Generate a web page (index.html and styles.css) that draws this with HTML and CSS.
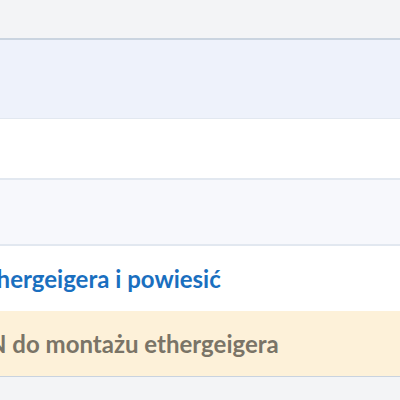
FILE: index.html
```html
<!DOCTYPE html>
<html lang="pl">
<head>
<meta charset="utf-8">
<link rel="stylesheet" href="styles.css">
</head>
<body>
<div class="page">
  <div class="top"></div>
  <div class="row row-head"></div>
  <div class="row row-white row-short"></div>
  <div class="row row-alt"></div>
  <div class="row row-white row-text"><span class="link cut-link">ethergeigera i powiesić</span></div>
  <div class="row row-warn row-text"><span class="note cut-note">N do montażu ethergeigera</span></div>
  <div class="bottom"></div>
</div>
</body>
</html>
```

FILE: styles.css
```css
html, body {
  margin: 0;
  padding: 0;
  background: #f3f4f6;
  font-family: Lato, "Noto Sans", sans-serif;
}
.page {
  display: flex;
  flex-direction: column;
  width: 400px;
  height: 400px;
  overflow: hidden;
}
.top {
  height: 38px;
  flex: none;
  background: #f3f4f6;
  border-bottom: 2px solid #cad4e0;
}
.row {
  flex: none;
  display: flex;
  align-items: center;
  overflow: hidden;
  white-space: nowrap;
}
.row-head {
  height: 78px;
  background: #eef2fb;
  border-bottom: 1px solid #e2e8f0;
}
.row-white {
  background: #ffffff;
}
.row-short {
  height: 59px;
  border-bottom: 2px solid #e2e8f0;
}
.row-alt {
  height: 64px;
  background: #f7f8fc;
  border-bottom: 2px solid #e2e8f0;
}
.row-text {
  height: 65px;
  font-size: 24px;
  font-weight: 700;
}
.row-warn {
  height: 65px;
  background: #fdf1d9;
  border-bottom: 1px solid #c9d3df;
}
.link {
  color: #1a6fbf;
}
.note {
  color: #7a7467;
}
.cut-link {
  margin-left: -25px;
}
.cut-note {
  margin-left: -12px;
}
.bottom {
  flex: 1;
  background: #f3f4f6;
}
```
